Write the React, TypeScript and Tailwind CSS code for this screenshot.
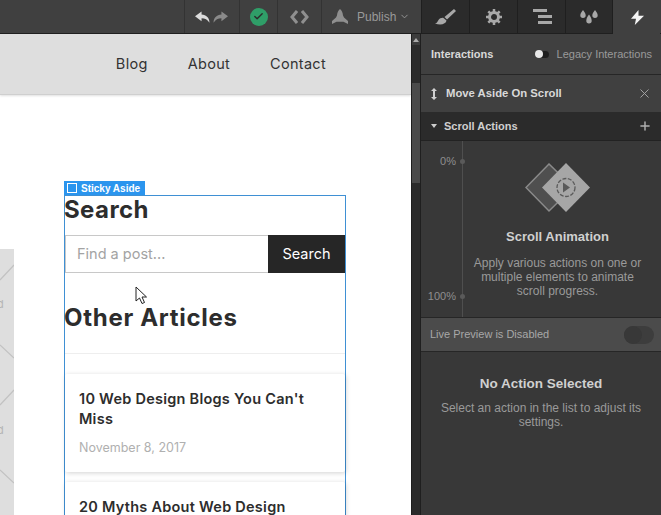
import { Check, ChevronDown, Plus, X } from "lucide-react";

const site = { fontFamily: "Inter, 'Open Sans', sans-serif" };
const ui = { fontFamily: "'Liberation Sans', Arial, sans-serif" };

function Toolbar() {
  return (
    <div className="flex h-[34px] shrink-0 border-b border-[#1f1f1f] bg-[#404040]" style={ui}>
      <div className="w-[184px] shrink-0" />
      <div className="flex w-[55px] items-center justify-center gap-[3px] border-l border-[#333] pr-[2px]">
        <svg width="15" height="12" viewBox="0 0 16 12" fill="#dcdcdc">
          <path d="M7 0 0 5.200 7 10.400V7.200c3.600 0 6.400 1.300 8.400 4.800.2-5.200-3.400-8.500-8.400-8.800z" />
        </svg>
        <svg width="15" height="12" viewBox="0 0 16 12" fill="#8a8a8a">
          <path d="M9 0l7 5.200L9 10.400V7.200c-3.600 0-6.400 1.300-8.400 4.800C.4 6.800 4 3.500 9 3.200z" />
        </svg>
      </div>
      <div className="flex w-[38px] items-center justify-center border-l border-[#333]">
        <div className="flex h-[18px] w-[18px] items-center justify-center rounded-full bg-[#2f9e68]">
          <Check size={11} strokeWidth={3} color="#2b2b2b" />
        </div>
      </div>
      <div className="flex w-[44px] items-center justify-center gap-[3px] border-l border-[#333]">
        <svg width="9" height="14" viewBox="0 0 9 14" fill="none" stroke="#8f8f8f" strokeWidth="3">
          <path d="M8 1 3 7l5 6" />
        </svg>
        <svg width="9" height="14" viewBox="0 0 9 14" fill="none" stroke="#8f8f8f" strokeWidth="3">
          <path d="m1 1 5 6-5 6" />
        </svg>
      </div>
      <div className="flex w-[100px] items-center border-l border-[#333] pl-[10px]">
        <svg width="16" height="15" viewBox="0 0 16 15" fill="#8f8f8f">
          <path d="M8 0c1.800 1.600 2.800 3.800 3 6.500l1 2L16 12v3l-4.500-2.200H4.500L0 15v-3l4-3.500 1-2C5.200 3.800 6.200 1.600 8 0z" />
        </svg>
        <span className="ml-[9px] text-[12px] text-[#9a9a9a]">Publish</span>
        <ChevronDown size={11} color="#9a9a9a" className="ml-[3px]" />
      </div>
      <div className="flex">
        <div className="flex w-[48px] items-center justify-center border-l border-[#1f1f1f] bg-[#2b2b2b]">
          <svg width="21" height="16" viewBox="0 0 21 16" fill="#a8a8a8">
            <path d="M19 0 21 2 12 10.500 9.500 8zM8.500 9l3 2.500C11 15 6 16.500 0 14.500c2.500-.5 2.500-2.500 3.500-3.500 1-1.500 3.500-2.500 5-2z" />
          </svg>
        </div>
        <div className="flex w-[48px] items-center justify-center border-l border-[#1f1f1f] bg-[#2b2b2b]">
          <svg width="16" height="16" viewBox="0 0 16 16">
            <circle cx="8" cy="8" r="4.500" fill="none" stroke="#a8a8a8" strokeWidth="3" />
            <path d="M8 0v3M8 13v3M0 8h3M13 8h3M2.300 2.300l2.200 2.200M11.500 11.500l2.200 2.200M13.700 2.300l-2.200 2.200M4.500 11.500l-2.200 2.200" stroke="#a8a8a8" strokeWidth="2.500" />
          </svg>
        </div>
        <div className="flex w-[48px] flex-col items-end justify-center gap-[3px] border-l border-[#1f1f1f] bg-[#2b2b2b] pr-[13px]">
          <div className="mr-[5px] h-[3px] w-[14px] bg-[#a8a8a8]" />
          <div className="h-[3px] w-[14px] bg-[#a8a8a8]" />
          <div className="h-[3px] w-[14px] bg-[#a8a8a8]" />
        </div>
        <div className="flex w-[48px] items-center justify-center border-l border-r border-[#1f1f1f] bg-[#2b2b2b]">
          <svg width="18" height="14" viewBox="0 0 18 14" fill="#a8a8a8">
            <path d="M3 0c1.500 2.200 2.700 3.700 2.700 5.200a2.700 2.700 0 0 1-5.400 0C.3 3.700 1.500 2.200 3 0zM15 0c1.500 2.200 2.700 3.700 2.700 5.200a2.700 2.700 0 0 1-5.400 0c0-1.500 1.200-3 2.700-5.200zM9 4.500c1.500 2.200 2.700 3.700 2.700 6.200a2.700 2.700 0 0 1-5.400 0c0-2.500 1.200-4 2.700-6.200z" />
          </svg>
        </div>
        <div className="-mb-px flex w-[47px] items-center justify-center bg-[#404040] pl-[2px]">
          <svg width="13" height="15" viewBox="0 0 13 15" fill="#f5f5f5">
            <path d="M7.500 0 0 8.800h5L3.800 15 13 5.800H7.500z" />
          </svg>
        </div>
      </div>
    </div>
  );
}

function Placeholder() {
  return (
    <div className="relative mt-[154px] h-[266px] w-[14px] shrink-0 overflow-hidden bg-[#dedede]" style={site}>
      <svg width="14" height="266" viewBox="0 0 14 266" fill="none" stroke="#c2c2c2" strokeWidth="1.200">
        <path d="M14 16 0 31M0 96l14 13M14 141 0 156M0 221l14 13" />
      </svg>
      <span className="absolute -left-[3px] top-[47px] text-[11px] text-[#b5b5b5]">d</span>
      <span className="absolute -left-[3px] top-[173px] text-[11px] text-[#b5b5b5]">d</span>
    </div>
  );
}

function ArticleCard({ title, date }: { title: string; date?: string }) {
  return (
    <div className="mb-[10px] rounded-[2px] bg-white px-[14px] pb-[14px] pt-[15px] shadow-[1px_1px_5px_rgba(0,0,0,0.18)]">
      <div className="text-[14.5px] font-semibold leading-[20px] tracking-[0.25px] text-[#2d2d2d]">{title}</div>
      {date && <div className="mt-[9px] text-[12.500px] leading-[20px] text-[#b0b0b0]">{date}</div>}
    </div>
  );
}

function Canvas() {
  return (
    <div className="relative flex h-full w-[411px] shrink-0 flex-col overflow-hidden bg-white" style={site}>
      <div className="flex h-[61px] shrink-0 items-center justify-end gap-[40px] border-b border-[#cfcfcf] bg-[#dedede] pr-[85px] text-[14.5px] tracking-[0.3px] text-[#333] shadow-[0_1px_2px_rgba(0,0,0,0.12)]">
        <span>Blog</span>
        <span>About</span>
        <span>Contact</span>
      </div>
      <div className="flex">
        <Placeholder />
        <div className="relative ml-[50px] mt-[100px] h-[400px] w-[282px] shrink-0 border border-[#3f90d4]">
          <div className="absolute -left-px -top-[15px] flex h-[14px] w-[81px] items-center gap-[4px] bg-[#2b95ee] pl-[3px] text-[10px] font-bold text-white" style={ui}>
            <span className="h-[10px] w-[10px] border border-white" />
            Sticky Aside
          </div>
          <div className="-ml-px h-[27px] text-[24px] font-bold leading-[27px] tracking-[0.4px] text-[#2d2d2d]">Search</div>
          <div className="mt-[12px] flex h-[38px]">
            <div className="flex flex-1 items-center border-y border-l border-[#c8c8c8] pl-[11px] text-[14.5px] text-[#a3a3a3]">
              Find a post...
            </div>
            <div className="flex w-[77px] items-center justify-center bg-[#262626] text-[14.5px] text-white">Search</div>
          </div>
          <div className="-ml-px mt-[30px] h-[30px] text-[24px] font-bold leading-[30px] tracking-[0.7px] text-[#2d2d2d]">Other Articles</div>
          <div className="mt-[20px] border-t border-[#eeeeee] pt-[20px]">
            <ArticleCard title="10 Web Design Blogs You Can't Miss" date="November 8, 2017" />
            <ArticleCard title="20 Myths About Web Design" />
          </div>
        </div>
      </div>
      <svg className="absolute left-[135px] top-[252px]" width="13" height="19" viewBox="0 0 13 19" fill="#fff" stroke="#222">
        <path d="M1 1v14l3.500-3 2.500 5.500 2.500-1-2.500-5.500H11.500z" />
      </svg>
    </div>
  );
}

function Scrollbar() {
  return (
    <div className="flex h-full w-[10px] shrink-0 flex-col border-x border-[#1f1f1f] bg-[#2b2b2b]">
      <div className="flex h-[11px] items-center justify-center bg-[#3c3c3c]">
        <div className="h-0 w-0 border-x-[3px] border-b-[4px] border-x-transparent border-b-[#aaa]" />
      </div>
      <div className="mt-[38px] h-[100px] bg-[#4a4a4a]" />
    </div>
  );
}

function ScrollIllustration() {
  return (
    <svg width="66" height="50" viewBox="0 0 66 50">
      <path d="M24 1 1 24.500 24 48l24-23.500z" fill="#4f4f4f" stroke="#8a8a8a" strokeWidth="1.500" />
      <path d="M41 0 17 24.500 41 49l24-24.500z" fill="#a6a6a6" />
      <circle cx="41" cy="24.500" r="9" fill="none" stroke="#5a5a5a" strokeWidth="1.300" strokeDasharray="4 1.500" />
      <path d="M38 19.500v10l7-5z" fill="#5a5a5a" />
    </svg>
  );
}

function Panel() {
  return (
    <div className="flex h-full flex-1 flex-col bg-[#404040]" style={ui}>
      <div className="flex h-[41px] shrink-0 items-center border-b border-[#262626] pl-[10px] pr-[9px]">
        <span className="text-[11px] font-bold text-[#d9d9d9]">Interactions</span>
        <div className="ml-auto flex h-[7px] w-[14px] items-center rounded-full bg-[#1f1f1f]">
          <div className="h-[8px] w-[8px] rounded-full bg-[#e8e8e8]" />
        </div>
        <span className="ml-[8px] text-[11px] text-[#9a9a9a]">Legacy Interactions</span>
      </div>
      <div className="flex h-[37px] shrink-0 items-center pl-[10px] pr-[9px]">
        <svg width="6" height="12" viewBox="0 0 6 12" fill="#d0d0d0">
          <path d="M3 0 6 3H4v6h2l-3 3-3-3h2V3H0z" />
        </svg>
        <span className="ml-[9px] text-[11.300px] font-bold text-[#d9d9d9]">Move Aside On Scroll</span>
        <X size={15} strokeWidth={1.500} color="#a8a8a8" className="ml-auto" />
      </div>
      <div className="flex h-[29px] shrink-0 items-center border-b border-[#222] bg-[#2b2b2b] pl-[10px] pr-[9px]">
        <div className="h-0 w-0 border-x-[3px] border-t-[4px] border-x-transparent border-t-[#ccc]" />
        <span className="ml-[7px] text-[11px] font-bold text-[#d0d0d0]">Scroll Actions</span>
        <Plus size={14} strokeWidth={2.500} color="#b0b0b0" className="ml-auto" />
      </div>
      <div className="flex h-[176px] shrink-0 bg-[#383838]">
        <div className="relative w-[42px] shrink-0 border-r border-[#4f4f4f]">
          <div className="absolute right-[6px] top-[14px] text-[11px] leading-[13px] text-[#8f8f8f]">0%</div>
          <div className="absolute -right-[3px] top-[18px] h-[5px] w-[5px] rounded-full bg-[#5a5a5a]" />
          <div className="absolute right-[6px] top-[149px] text-[11px] leading-[13px] text-[#8f8f8f]">100%</div>
          <div className="absolute -right-[3px] top-[153px] h-[5px] w-[5px] rounded-full bg-[#5a5a5a]" />
        </div>
        <div className="flex flex-1 flex-col items-center pr-[9px] pt-[22px] text-center">
          <ScrollIllustration />
          <div className="mt-[14px] text-[13px] font-bold text-[#d0d0d0]">Scroll Animation</div>
          <div className="mt-[9px] w-[180px] text-[12px] leading-[14px] text-[#9a9a9a]">
            Apply various actions on one or multiple elements to animate scroll progress.
          </div>
        </div>
      </div>
      <div className="flex h-[35px] shrink-0 items-center border-y border-[#262626] bg-[#4b4b4b] pl-[9px] pr-[7px]">
        <span className="text-[11px] text-[#a8a8a8]">Live Preview is Disabled</span>
        <div className="ml-auto flex h-[18px] w-[30px] items-center rounded-full bg-[#3d3d3d]">
          <div className="h-[18px] w-[18px] rounded-full bg-[#383838]" />
        </div>
      </div>
      <div className="flex flex-1 flex-col items-center bg-[#383838] pt-[22px] text-center">
        <div className="text-[13.500px] font-bold text-[#d0d0d0]">No Action Selected</div>
        <div className="mt-[7px] w-[215px] text-[12px] leading-[14px] text-[#9a9a9a]">
          Select an action in the list to adjust its settings.
        </div>
      </div>
    </div>
  );
}

export default function App() {
  return (
    <div className="flex h-[515px] w-[661px] flex-col overflow-hidden">
      <Toolbar />
      <div className="flex min-h-0 flex-1">
        <Canvas />
        <Scrollbar />
        <Panel />
      </div>
    </div>
  );
}
